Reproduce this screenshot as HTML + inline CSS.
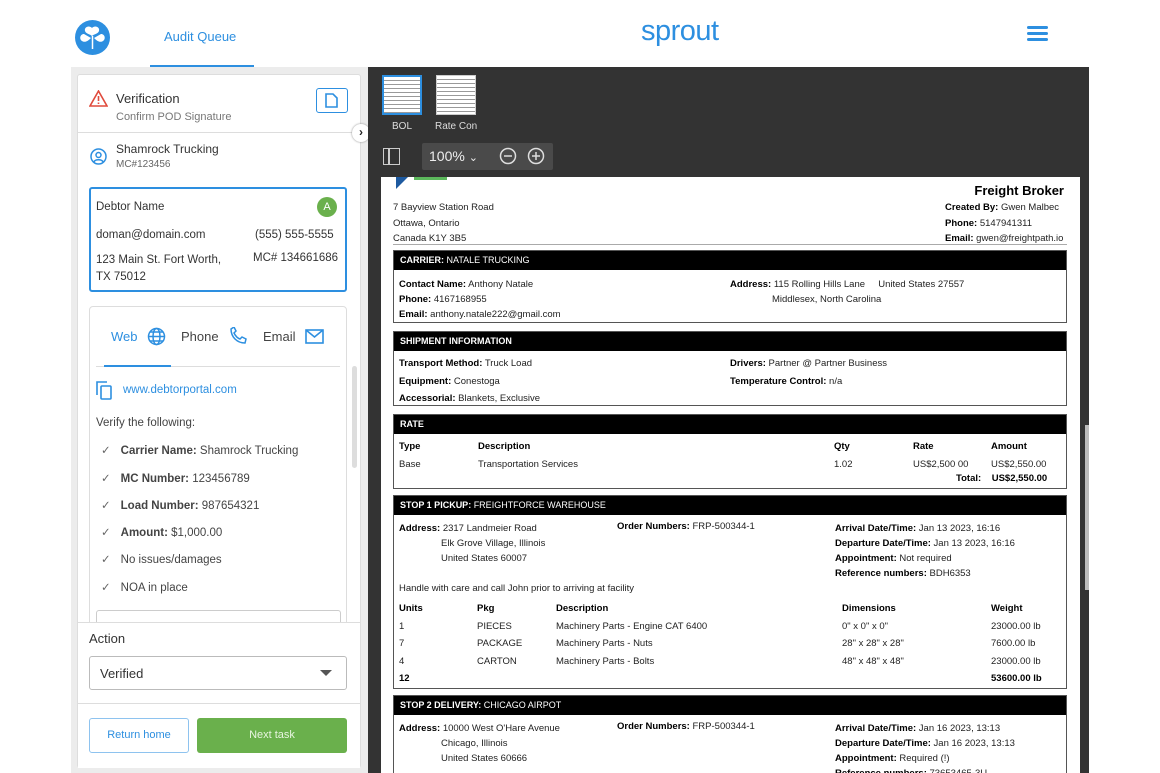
<!DOCTYPE html>
<html style="width:1160px;height:773px;overflow:hidden"><head><meta charset="utf-8"><style>
*{box-sizing:border-box;margin:0;padding:0}
body{width:1160px;height:773px;background:#fff;font-family:"Liberation Sans",sans-serif;position:relative;overflow:hidden;color:#333}
.a{position:absolute}
.blue{color:#2d8fe0}
.doc{font-family:"Liberation Sans Narrow","Liberation Sans",sans-serif;font-size:9.5px;color:#222}
.doc b{font-weight:bold;color:#000}
.bar{position:absolute;left:0;right:0;top:0;height:19px;background:#000;color:#fff;font-size:9px;padding:4px 6px;line-height:11px}
.box{position:absolute;left:393px;width:674px;border:1px solid #555}
.li{position:absolute;left:101px;font-size:11.5px;color:#444}
.li:before{content:"✓";color:#666;margin-right:10px}
</style></head><body>
<svg class="a" style="left:75px;top:20px" width="35" height="35" viewBox="0 0 35 35"><circle cx="17.5" cy="17.5" r="17.5" fill="#2d8fe0"/><path d="M17 8c-3-3-8-1-7 3 1 3 5 3 7 5 2-2 6-2 7-5 1-4-4-6-7-3zM9 14c-4 0-5 5-2 7 3 2 6 0 9-3zM26 14c4 0 5 5 2 7-3 2-6 0-9-3z" fill="#fff"/><path d="M17.5 16v13" stroke="#fff" stroke-width="1.5"/></svg>
<div class="a blue" style="left:164px;top:29px;font-size:13px">Audit Queue</div>
<div class="a" style="left:150px;top:65px;width:104px;height:2px;background:#2d8fe0"></div>
<div class="a blue" style="left:641px;top:15px;font-size:29px;letter-spacing:-0.5px">sprout</div>
<div class="a" style="left:1027px;top:26px;width:21px;height:3px;background:#2d8fe0;border-radius:2px;box-shadow:0 6px 0 #2d8fe0,0 12px 0 #2d8fe0"></div>
<div class="a" style="left:71px;top:67px;width:297px;height:706px;background:#ececec"></div>
<div class="a" style="left:77px;top:74px;width:284px;height:694px;background:#fff;border:1px solid #ddd;border-radius:3px"></div>
<svg class="a" style="left:89px;top:90px" width="19" height="17" viewBox="0 0 19 17"><path d="M9.5 1L18 16H1z" fill="none" stroke="#e04a3c" stroke-width="1.6"/><path d="M9.5 6v5M9.5 12.5v1.5" stroke="#e04a3c" stroke-width="1.6"/></svg>
<div class="a" style="left:116px;top:91px;font-size:13px;color:#333">Verification</div>
<div class="a" style="left:116px;top:111px;font-size:11px;color:#777">Confirm POD Signature</div>
<div class="a" style="left:316px;top:88px;width:32px;height:25px;border:1.5px solid #2d8fe0;border-radius:3px"></div>
<svg class="a" style="left:325px;top:93px" width="13" height="15" viewBox="0 0 13 15"><path d="M1 1h7l4 4v9H1z" fill="none" stroke="#2d8fe0" stroke-width="1.6"/></svg>
<div class="a" style="left:78px;top:132px;width:282px;height:1px;background:#ddd"></div>
<div class="a" style="left:352px;top:124px;width:18px;height:18px;border-radius:50%;background:#fff;box-shadow:0 0 2px #888;font-size:12px;text-align:center;line-height:17px;color:#222;font-weight:bold">›</div>
<svg class="a" style="left:90px;top:148px" width="17" height="17" viewBox="0 0 17 17"><circle cx="8.5" cy="8.5" r="7.5" fill="none" stroke="#2d8fe0" stroke-width="1.5"/><circle cx="8.5" cy="7" r="2.5" fill="none" stroke="#2d8fe0" stroke-width="1.5"/><path d="M4 14c1-3 8-3 9 0" fill="none" stroke="#2d8fe0" stroke-width="1.5"/></svg>
<div class="a" style="left:116px;top:142px;font-size:12px;color:#333">Shamrock Trucking</div>
<div class="a" style="left:116px;top:159px;font-size:10px;color:#666">MC#123456</div>
<div class="a" style="left:89px;top:187px;width:258px;height:105px;border:2px solid #2d8fe0;border-radius:3px"></div>
<div class="a" style="left:96px;top:201px;font-size:11.5px;color:#333">Debtor Name</div>
<div class="a" style="left:317px;top:197px;width:20px;height:20px;border-radius:50%;background:#6ab04c;color:#fff;font-size:11px;text-align:center;line-height:20px">A</div>
<div class="a" style="left:96px;top:229px;font-size:11.5px;color:#333">doman@domain.com</div>
<div class="a" style="left:255px;top:229px;font-size:11.5px;color:#333">(555) 555-5555</div>
<div class="a" style="left:96px;top:252px;font-size:11.5px;color:#333;line-height:17px">123 Main St. Fort Worth,<br>TX 75012</div>
<div class="a" style="left:253px;top:252px;font-size:11.5px;color:#333">MC# 134661686</div>
<div class="a" style="left:89px;top:306px;width:258px;height:330px;border:1px solid #ddd;border-radius:4px"></div>
<div class="a blue" style="left:111px;top:329px;font-size:13px">Web</div>
<svg class="a" style="left:147px;top:327px" width="19" height="19" viewBox="0 0 19 19"><g fill="none" stroke="#2d8fe0" stroke-width="1.5"><circle cx="9.5" cy="9.5" r="8"/><ellipse cx="9.5" cy="9.5" rx="3.5" ry="8"/><path d="M1.5 9.5h16M3 5h13M3 14h13"/></g></svg>
<div class="a" style="left:181px;top:329px;font-size:13px;color:#444">Phone</div>
<svg class="a" style="left:229px;top:327px" width="18" height="18" viewBox="0 0 18 18"><path d="M2 2c0 8 6 14 14 14l1-4-4-2-2 2c-3-1-5-4-6-6l2-2-2-4z" fill="none" stroke="#2d8fe0" stroke-width="1.5"/></svg>
<div class="a" style="left:263px;top:329px;font-size:13px;color:#444">Email</div>
<svg class="a" style="left:305px;top:329px" width="19" height="15" viewBox="0 0 19 15"><rect x="1" y="1" width="17" height="13" fill="none" stroke="#2d8fe0" stroke-width="1.6"/><path d="M1 1l8.5 7L18 1" fill="none" stroke="#2d8fe0" stroke-width="1.6"/></svg>
<div class="a" style="left:96px;top:366px;width:244px;height:1px;background:#ddd"></div>
<div class="a" style="left:104px;top:365px;width:67px;height:2px;background:#2d8fe0"></div>
<div class="a" style="left:352px;top:366px;width:5px;height:102px;background:#ddd;border-radius:3px"></div>
<svg class="a" style="left:96px;top:381px" width="18" height="20" viewBox="0 0 18 20"><g fill="none" stroke="#2d8fe0" stroke-width="1.6"><path d="M1 14V1h10"/><rect x="5" y="5" width="10" height="13" rx="1"/></g></svg>
<div class="a blue" style="left:123px;top:384px;font-size:11.5px">www.debtorportal.com</div>
<div class="a" style="left:96px;top:417px;font-size:11.5px;color:#444">Verify the following:</div>
<div class="li" style="top:443px"><b>Carrier Name:</b> Shamrock Trucking</div>
<div class="li" style="top:471px"><b>MC Number:</b> 123456789</div>
<div class="li" style="top:498px"><b>Load Number:</b> 987654321</div>
<div class="li" style="top:525px"><b>Amount:</b> $1,000.00</div>
<div class="li" style="top:552px">No issues/damages</div>
<div class="li" style="top:580px">NOA in place</div>
<div class="a" style="left:96px;top:610px;width:245px;height:14px;border:1px solid #ccc;border-bottom:0;border-radius:3px 3px 0 0"></div>
<div class="a" style="left:78px;top:622px;width:282px;height:146px;background:#fff;border-top:1px solid #ddd"></div>
<div class="a" style="left:89px;top:631px;font-size:13px;color:#333">Action</div>
<div class="a" style="left:89px;top:656px;width:258px;height:34px;border:1px solid #bbb;border-radius:3px;font-size:13px;color:#333;padding:9px 10px">Verified</div>
<div class="a" style="left:320px;top:670px;border-left:6px solid transparent;border-right:6px solid transparent;border-top:6px solid #555"></div>
<div class="a" style="left:78px;top:703px;width:282px;height:1px;background:#ddd"></div>
<div class="a blue" style="left:89px;top:718px;width:100px;height:35px;border:1px solid #8ec3ef;border-radius:3px;font-size:11px;text-align:center;line-height:33px">Return home</div>
<div class="a" style="left:197px;top:718px;width:150px;height:35px;background:#6ab04c;border-radius:3px;font-size:11px;color:#e8f5e0;text-align:center;line-height:35px">Next task</div>
<div class="a" style="left:368px;top:67px;width:721px;height:706px;background:#333"></div>
<div class="a" style="left:382px;top:75px;width:40px;height:40px;background:#f4f4f4;border:2px solid #2d8fe0;background-image:repeating-linear-gradient(#fff 0 3px,#999 3px 4px)"></div>
<div class="a" style="left:436px;top:75px;width:40px;height:40px;background-image:repeating-linear-gradient(#fff 0 3px,#999 3px 4px);border:1px solid #ccc"></div>
<div class="a" style="left:392px;top:121px;font-size:10px;color:#ddd">BOL</div>
<div class="a" style="left:435px;top:121px;font-size:10px;color:#ddd">Rate Con</div>
<div class="a" style="left:383px;top:148px;width:17px;height:17px;border:1.5px solid #ccc"></div>
<div class="a" style="left:388px;top:148px;width:1.5px;height:17px;background:#ccc"></div>
<div class="a" style="left:422px;top:143px;width:131px;height:27px;background:#4a4a4a;border-radius:2px"></div>
<div class="a" style="left:429px;top:148px;font-size:14px;color:#eee">100% <span style="font-size:11px">⌄</span></div>
<svg class="a" style="left:499px;top:147px" width="46" height="18" viewBox="0 0 46 18"><g fill="none" stroke="#ddd" stroke-width="1.5"><circle cx="9" cy="9" r="7.5"/><path d="M5 9h8"/><circle cx="37" cy="9" r="7.5"/><path d="M33 9h8M37 5v8"/></g></svg>
<div class="a" style="left:1085px;top:425px;width:4px;height:165px;background:#bbb"></div>
<div class="a" style="left:381px;top:177px;width:699px;height:596px;background:#fff;overflow:hidden">
<div class="a doc" style="left:-381px;top:-177px;width:1160px;height:773px">
<div class="a" style="left:396px;top:177px;border-top:12px solid #1e5aa0;border-right:12px solid transparent"></div>
<div class="a" style="left:414px;top:177px;width:33px;height:3px;background:#5cb85c"></div>
<div class="a" style="left:393px;top:200px;line-height:15.5px">7 Bayview Station Road<br>Ottawa, Ontario<br>Canada K1Y 3B5</div>
<div class="a" style="right:96px;top:183px;font-size:13px;font-weight:bold;color:#000">Freight Broker</div>
<div class="a" style="left:945px;top:200px;line-height:15.5px"><b>Created By:</b> Gwen Malbec<br><b>Phone:</b> 5147941311<br><b>Email:</b> gwen@freightpath.io</div>
<div class="a" style="left:393px;top:244px;width:674px;height:1px;background:#aaa"></div>
<div class="box" style="top:250px;height:73px"><div class="bar"><b style="color:#fff">CARRIER:</b> NATALE TRUCKING</div>
<div class="a" style="left:5px;top:26px;line-height:15px"><b>Contact Name:</b> Anthony Natale<br><b>Phone:</b> 4167168955<br><b>Email:</b> anthony.natale222@gmail.com</div>
<div class="a" style="left:336px;top:26px;line-height:15px"><b>Address:</b> 115 Rolling Hills Lane &nbsp;&nbsp;&nbsp;&nbsp;United States 27557<br><span style="padding-left:42px">Middlesex, North Carolina</span></div></div>
<div class="box" style="top:331px;height:75px"><div class="bar"><b style="color:#fff">SHIPMENT INFORMATION</b></div>
<div class="a" style="left:5px;top:23px;line-height:17.5px"><b>Transport Method:</b> Truck Load<br><b>Equipment:</b> Conestoga<br><b>Accessorial:</b> Blankets, Exclusive</div>
<div class="a" style="left:336px;top:23px;line-height:17.5px"><b>Drivers:</b> Partner @ Partner Business<br><b>Temperature Control:</b> n/a</div></div>
<div class="box" style="top:414px;height:75px"><div class="bar"><b style="color:#fff">RATE</b></div>
<div class="a" style="left:5px;top:23px;line-height:18px"><b>Type</b><br>Base</div>
<div class="a" style="left:84px;top:23px;line-height:18px"><b>Description</b><br>Transportation Services</div>
<div class="a" style="left:440px;top:23px;line-height:18px"><b>Qty</b><br>1.02</div>
<div class="a" style="left:519px;top:23px;line-height:18px"><b>Rate</b><br>US$2,500 00</div>
<div class="a" style="left:597px;top:23px;line-height:18px"><b>Amount</b><br>US$2,550.00</div>
<div class="a" style="left:562px;top:58px"><b>Total:</b> &nbsp;&nbsp;&nbsp;<b>US$2,550.00</b></div></div>
<div class="box" style="top:495px;height:194px"><div class="bar"><b style="color:#fff">STOP 1 PICKUP:</b> FREIGHTFORCE WAREHOUSE</div>
<div class="a" style="left:5px;top:25px;line-height:15px"><b>Address:</b> 2317 Landmeier Road<br><span style="padding-left:42px">Elk Grove Village, Illinois</span><br><span style="padding-left:42px">United States 60007</span></div>
<div class="a" style="left:223px;top:25px"><b>Order Numbers:</b> FRP-500344-1</div>
<div class="a" style="left:441px;top:25px;line-height:15px"><b>Arrival Date/Time:</b> Jan 13 2023, 16:16<br><b>Departure Date/Time:</b> Jan 13 2023, 16:16<br><b>Appointment:</b> Not required<br><b>Reference numbers:</b> BDH6353</div>
<div class="a" style="left:5px;top:87px">Handle with care and call John prior to arriving at facility</div>
<div class="a" style="left:5px;top:104px;line-height:17.5px"><b>Units</b><br>1<br>7<br>4<br><b>12</b></div>
<div class="a" style="left:83px;top:104px;line-height:17.5px"><b>Pkg</b><br>PIECES<br>PACKAGE<br>CARTON</div>
<div class="a" style="left:162px;top:104px;line-height:17.5px"><b>Description</b><br>Machinery Parts - Engine CAT 6400<br>Machinery Parts - Nuts<br>Machinery Parts - Bolts</div>
<div class="a" style="left:448px;top:104px;line-height:17.5px"><b>Dimensions</b><br>0" x 0" x 0"<br>28" x 28" x 28"<br>48" x 48" x 48"</div>
<div class="a" style="left:597px;top:104px;line-height:17.5px"><b>Weight</b><br>23000.00 lb<br>7600.00 lb<br>23000.00 lb<br><b>53600.00 lb</b></div></div>
<div class="box" style="top:695px;height:90px"><div class="bar"><b style="color:#fff">STOP 2 DELIVERY:</b> CHICAGO AIRPOT</div>
<div class="a" style="left:5px;top:25px;line-height:15px"><b>Address:</b> 10000 West O'Hare Avenue<br><span style="padding-left:42px">Chicago, Illinois</span><br><span style="padding-left:42px">United States 60666</span></div>
<div class="a" style="left:223px;top:25px"><b>Order Numbers:</b> FRP-500344-1</div>
<div class="a" style="left:441px;top:25px;line-height:15px"><b>Arrival Date/Time:</b> Jan 16 2023, 13:13<br><b>Departure Date/Time:</b> Jan 16 2023, 13:13<br><b>Appointment:</b> Required (!)<br><b>Reference numbers:</b> 73653465-3U</div></div>
</div></div>
</body></html>
